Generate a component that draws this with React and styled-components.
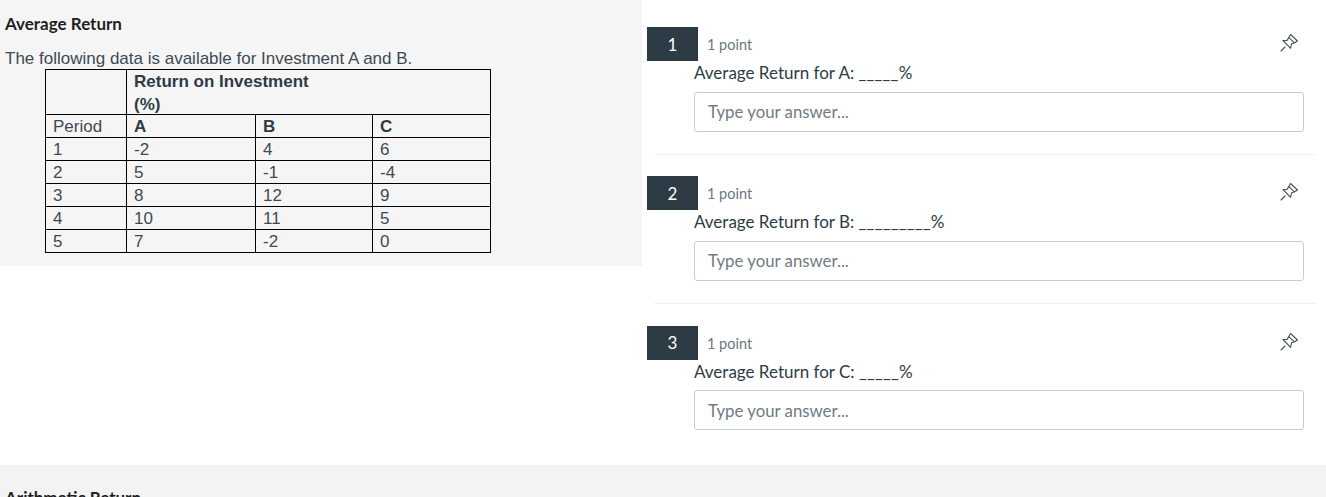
import React from "react";
import styled, { createGlobalStyle } from "styled-components";

const Global = createGlobalStyle`
  html, body { margin: 0; padding: 0; background: #fff; overflow: hidden; height: 497px; }
  * { box-sizing: border-box; }
`;
const Page = styled.div`
  width: 1326px; height: 497px; overflow: hidden;
  display: flex; flex-direction: column;
`;
const Top = styled.div`
  display: flex; height: 465px;
`;
const Left = styled.section`
  width: 642px; height: 266px; background: #f5f5f5; padding: 14px 0 0 5px;
`;
const Heading = styled.h2`
  margin: 0; font: 700 17px/20px Lato, sans-serif; color: #1f1f1f;
`;
const Intro = styled.p`
  margin: 15px 0 0; font: 17px/20px "Liberation Sans", Arial, sans-serif; color: #3d4a54;
`;
const Table = styled.table`
  margin: 0 0 0 40px; width: 445px; table-layout: fixed; border-collapse: collapse;
  font: 17px/21px "Liberation Sans", Arial, sans-serif; color: #3d4a54;
`;
const Col = styled.col`
  width: ${p => p.$w}px;
`;
const Cell = styled.td`
  border: 1px solid #000; padding: 1px 7px 0; height: 23px; vertical-align: middle; font-weight: ${p => p.$bold ? 700 : 400};
  color: ${p => p.$bold ? "#2d3b45" : "#3d4a54"};
`;
const HeaderCell = styled.td`
  border: 1px solid #000; padding: 0 7px; height: 45px; vertical-align: top; font-weight: 700; color: #2d3b45;
`;
const HeaderText = styled.div`
  line-height: 23px; margin-bottom: -2px;
`;
const Right = styled.section`
  flex: 1; padding: 27px 10px 0 5px;
`;
const Question = styled.article`
  height: 149.3px; display: grid; grid-template-columns: 47px 1fr 26px; grid-template-rows: 34px 30.6px 40px;
  position: relative; align-content: start;
`;
const Badge = styled.div`
  width: 51px; height: 34px; background: #2d3b45; color: #fff; display: flex; align-items: center; justify-content: center;
  font: 17px/1 Lato, sans-serif;
`;
const Points = styled.div`
  padding-left: 13px; font: 14.5px/35px Lato, sans-serif; color: #6b7780; height: 34px;
`;
const PinBox = styled.div`
  display: flex; justify-content: flex-start; padding-top: 6px; margin-left: -11px; color: #47535c;
`;
const Prompt = styled.div`
  grid-column: 2 / 4; font: 17px/24px Lato, sans-serif; color: #2d3b45;
`;
const Blank = styled.span`
  letter-spacing: 0.22px;
`;
const Answer = styled.input`
  grid-column: 2 / 4; width: 610px; height: 40px; border: 1px solid #c7cdd1; border-radius: 3px; background: #fff;
  padding: 0 13px; font: 16.8px Lato, sans-serif; color: #2d3b45; outline: none;
  &::placeholder { color: #6f7b84; opacity: 1; }
`;
const Divider = styled.hr`
  position: absolute; left: 7px; right: 0; top: 127px; margin: 0; border: 0; border-top: 1px solid #f1f1f1;
`;
const Bottom = styled.section`
  flex: 1; background: #f3f3f3; padding: 23px 0 0 5px;
`;

const rows = [["1","-2","4","6"],["2","5","-1","-4"],["3","8","12","9"],["4","10","11","5"],["5","7","-2","0"]];

const Pin = () => (
  <svg width="20" height="20" viewBox="0 0 20 20" fill="none" stroke="currentColor" strokeWidth="1.1" strokeLinejoin="round" strokeLinecap="round">
    <path d="M2 18 L6 14" />
    <path d="M4 7.5 L8 7.5 L9.8 4.6 L11.5 1.5 L18.5 8 L15.5 9.8 L12.5 10.8 L11.6 15.3 Z" />
    <path d="M9.8 4.6 L15.5 9.8" />
  </svg>
);

const questions = [
  { n: 1, label: "Average Return for A: ", blank: "_____" },
  { n: 2, label: "Average Return for B: ", blank: "_________" },
  { n: 3, label: "Average Return for C: ", blank: "_____" },
];

export default function App() {
  return (
    <Page>
      <Global />
      <Top>
        <Left>
          <Heading>Average Return</Heading>
          <Intro>The following data is available for Investment A and B.</Intro>
          <Table>
            <colgroup><Col $w={81} /><Col $w={129} /><Col $w={117} /><Col $w={118} /></colgroup>
            <tbody>
              <tr><HeaderCell /><HeaderCell colSpan={3}><HeaderText>Return on Investment<br />(%)</HeaderText></HeaderCell></tr>
              <tr><Cell>Period</Cell><Cell $bold>A</Cell><Cell $bold>B</Cell><Cell $bold>C</Cell></tr>
              {rows.map(r => <tr key={r[0]}>{r.map((c, i) => <Cell key={i}>{c}</Cell>)}</tr>)}
            </tbody>
          </Table>
        </Left>
        <Right>
          {questions.map(q => (
            <Question key={q.n}>
              <Badge>{q.n}</Badge>
              <Points>1 point</Points>
              <PinBox><Pin /></PinBox>
              <Prompt>{q.label}<Blank>{q.blank}</Blank>%</Prompt>
              <Answer placeholder="Type your answer..." />
              {q.n < 3 && <Divider />}
            </Question>
          ))}
        </Right>
      </Top>
      <Bottom><Heading>Arithmetic Return</Heading></Bottom>
    </Page>
  );
}
